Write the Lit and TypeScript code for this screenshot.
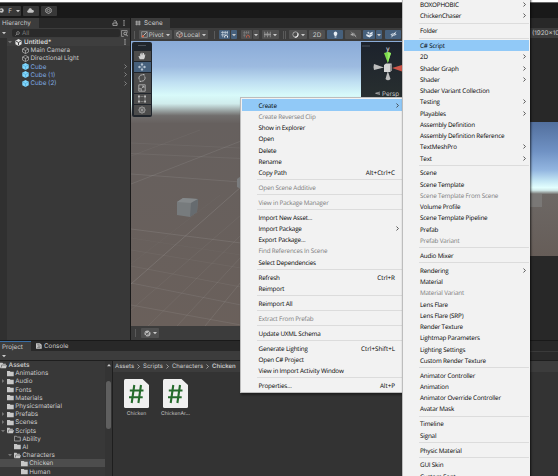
import { LitElement, html, css, svg, nothing } from "lit";
import { customElement, property } from "lit/decorators.js";
import { classMap } from "lit/directives/class-map.js";

interface Item { label: string; off?: boolean; hot?: boolean; sub?: boolean; key?: string }
type Entry = Item | null;

const it = (label: string, o: Partial<Item> = {}): Item => ({ label, ...o });
const sub = { sub: true };
const off = { off: true };

const CONTEXT: Entry[] = [
  it("Create", { sub: true, hot: true }), it("Create Reversed Clip", off), it("Show in Explorer"), it("Open"),
  it("Delete"), it("Rename"), it("Copy Path", { key: "Alt+Ctrl+C" }), null,
  it("Open Scene Additive", off), null, it("View in Package Manager", off), null,
  it("Import New Asset..."), it("Import Package", sub), it("Export Package..."),
  it("Find References In Scene", off), it("Select Dependencies"), null,
  it("Refresh", { key: "Ctrl+R" }), it("Reimport"), null, it("Reimport All"), null,
  it("Extract From Prefab", off), null, it("Update UXML Schema"), null,
  it("Generate Lighting", { key: "Ctrl+Shift+L" }), it("Open C# Project"), it("View in Import Activity Window"), null,
  it("Properties...", { key: "Alt+P" }),
];

const CREATE: Entry[] = [
  it("BOXOPHOBIC", sub), it("ChickenChaser", sub), null, it("Folder"), null,
  it("C# Script", { hot: true }), it("2D", sub), it("Shader Graph", sub), it("Shader", sub),
  it("Shader Variant Collection"), it("Testing", sub), it("Playables", sub), it("Assembly Definition"),
  it("Assembly Definition Reference"), it("TextMeshPro", sub), it("Text", sub), null,
  it("Scene"), it("Scene Template"), it("Scene Template From Scene", off), it("Volume Profile"),
  it("Scene Template Pipeline"), it("Prefab"), it("Prefab Variant", off), null, it("Audio Mixer"), null,
  it("Rendering", sub), it("Material"), it("Material Variant", off), it("Lens Flare"), it("Lens Flare (SRP)"),
  it("Render Texture"), it("Lightmap Parameters"), it("Lighting Settings"), it("Custom Render Texture"), null,
  it("Animator Controller"), it("Animation"), it("Animator Override Controller"), it("Avatar Mask"), null,
  it("Timeline"), it("Signal"), null, it("Physic Material"), null, it("GUI Skin"), it("Custom Font"),
];

@customElement("popup-menu")
class PopupMenu extends LitElement {
  @property({ attribute: false }) items: Entry[] = [];
  static styles = css`
    :host { display: block; background: #f2f2f2; color: #000; font: 6.3px "Open Sans", "Noto Sans", sans-serif; letter-spacing: -0.18px; text-rendering: geometricPrecision; }
    .row { height: 11.25px; line-height: 11px; display: flex; align-items: center; padding: 0 7px 0 16.5px; white-space: nowrap; }
    .label { flex: 1; }
    .keys { letter-spacing: -0.02px; }
    .hot { background: #91c9f7; }
    .off { color: #7c7c7c; }
    .sep { height: 3.67px; display: flex; align-items: center; padding-left: 15px; }
    .line { flex: 1; height: 1px; background: #dcdcdc; }
    svg { width: 3px; height: 5px; margin-right: -4px; }
  `;
  render() {
    return this.items.map((e) => e === null
      ? html`<div class="sep"><div class="line"></div></div>`
      : html`<div class=${classMap({ row: true, hot: !!e.hot, off: !!e.off })}>
          <span class="label">${e.label}</span>
          ${e.key ? html`<span class="keys">${e.key}</span>` : nothing}
          ${e.sub ? html`<svg viewBox="0 0 3 5"><path d="M.5 .5L2.4 2.5L.5 4.5" fill="none" stroke="#333" stroke-width=".8"/></svg>` : nothing}
        </div>`);
  }
}

const ICONS: Record<string, unknown> = {
  unity: svg`<path d="M5 0L9.4 2.5V7.5L5 10L.6 7.5V2.5Z" fill="#e4e4e4"/><path d="M5 5V9M5 5L1.5 3M5 5L8.5 3" stroke="#333" stroke-width="1.3"/>`,
  cube: svg`<path d="M5 .6L9.2 2.8V7.2L5 9.4L.8 7.2V2.8ZM.8 2.8L5 5L9.2 2.8M5 5V9.4" fill="none" stroke="#b8b8b8" stroke-width="1"/>`,
  prefab: svg`<path d="M5 0L9.6 2.4V7.6L5 10L.4 7.6V2.4Z" fill="#7fd6fd"/><path d="M.6 2.6L5 5L9.4 2.6M5 5V9.6" fill="none" stroke="#4ba3d0" stroke-width=".9"/>`,
  folder: svg`<path d="M0 1.3H4L5 2.6H9.6V9H0Z" fill="#c8c8c8"/>`,
  empty: svg`<path d="M.6 1.8H3.8L4.8 3H9V8.6H.6Z" fill="none" stroke="#bdbdbd" stroke-width="1"/>`,
  open: svg`<path d="M0 1.2H3.6L4.6 2.4H8.4V4H2.4L.8 8.8H0Z" fill="#c8c8c8"/><path d="M2.8 4.6H10L8.4 9H1.4Z" fill="#c8c8c8"/>`,
  down: svg`<path d="M0 2.5H10L5 8Z" fill="currentColor"/>`,
  right: svg`<path d="M2.5 0V10L8 5Z" fill="currentColor"/>`,
  up: svg`<path d="M0 8H10L5 2.5Z" fill="currentColor"/>`,
  chev: svg`<path d="M3 1L7 5L3 9" fill="none" stroke="currentColor" stroke-width="1.3"/>`,
  search: svg`<circle cx="6" cy="4" r="2.8" fill="none" stroke="#aaa" stroke-width="1.2"/><path d="M4 6L1 9" stroke="#aaa" stroke-width="1.3"/>`,
  find: svg`<path d="M8.8 4V.8H.8V9.2H4" fill="none" stroke="#aaa"/><circle cx="6" cy="5" r="2" fill="none" stroke="#ccc"/><path d="M7.4 6.5L9.7 9" stroke="#ccc" stroke-width="1.3"/>`,
  lock: svg`<path d="M1.5 5H8.5V9H1.5Z" fill="none" stroke="#c4c4c4" stroke-width="1.2"/><path d="M3 2.2C3 .8 7 .8 7 2.2V5" fill="none" stroke="#c4c4c4" stroke-width="1.2"/>`,
  dots: svg`<path d="M4 .5H6V2.3H4ZM4 4H6V5.8H4ZM4 7.6H6V9.4H4Z" fill="#c4c4c4"/>`,
  hash: svg`<path d="M3 1V9M7 1V9M.5 3.3H9.5M.5 6.8H9.5" stroke="#d0d0d0" stroke-width="1.1"/>`,
  console: svg`<path d="M0 .5H6.5L9.5 3V9.5H0Z" fill="#c4c4c4"/><path d="M2 3H6M3.5 5.2H8M2 7.3H7" stroke="#444"/>`,
  cloud: svg`<path d="M2.3 8.2C-.4 8.2-.3 4.8 2 4.6C2.2 1.4 6.3 1 7 3.8C10.6 3.7 10.7 8.2 7.8 8.2Z" fill="#c4c4c4"/>`,
  gear: svg`<path d="M5 .7L8.8 2.8V7.2L5 9.3L1.2 7.2V2.8Z" fill="none" stroke="#b4b4b4" stroke-width="1.2"/><circle cx="5" cy="5" r="1.7" fill="none" stroke="#b4b4b4"/>`,
  user: svg`<circle cx="5" cy="5" r="4.4" fill="#c4c4c4"/><circle cx="4" cy="4.5" r="1.7" fill="#333"/>`,
  pivot: svg`<path d="M1 1H9V9H1Z" fill="none" stroke="#aaa" stroke-width="1"/><path d="M3 7L8 2" stroke="#ddd" stroke-width="1.1"/><path d="M1.4 6.2H4V8.8H1.4Z" fill="#e0613f"/>`,
  local: svg`<path d="M5 .8L9 2.8V7.2L5 9.2L1 7.2V2.8ZM1 2.8L5 5L9 2.8M5 5V9" fill="none" stroke="#bbb" stroke-width="1"/><circle cx="6.5" cy="6.5" r="1.8" fill="none" stroke="#c66a50"/>`,
  grid: svg`<path d="M2.5 0V9M6 0V5M9 0V5M0 2H10M0 5.5H6" stroke="#d9e2ec" stroke-width=".9"/><path d="M5.3 9.5V7Q7.3 4.5 9.3 7V9.5" fill="none" stroke="#fff" stroke-width="1.2"/>`,
  snap: svg`<path d="M2 0V9M5 0V4M8 0V4M0 2.5H9M0 6H4" stroke="#888" stroke-width=".8"/><path d="M5 9.5V7Q7 4.5 9 7V9.5" fill="none" stroke="#b85c48" stroke-width="1.4"/>`,
  ruler: svg`<path d="M1 1V9M3 3V7M5 1V9M7 3V7M9 1V9M0 5H10" stroke="#aaa" stroke-width=".9"/>`,
  shade: svg`<circle cx="5" cy="5" r="3.8" fill="#4d4d4d" stroke="#c8c8c8" stroke-width="1"/><path d="M8 3.2A3.8 3.8 0 0 1 4 8.8" stroke="#eee" stroke-width="1.6" fill="none"/>`,
  bulb: svg`<path d="M5 .8A2.9 2.9 0 0 1 6.5 6V7.2H3.5V6A2.9 2.9 0 0 1 5 .8ZM3.7 8H6.3V9.2H3.7Z" fill="#e8eef4"/>`,
  audio: svg`<path d="M1 3.8H2.8L5 2V8L2.8 6.2H1Z" fill="#aaa"/><path d="M6.5 3.5V6.5M8 5.5V8M1.5 1L9 9" stroke="#aaa" stroke-width=".9"/>`,
  fx: svg`<path d="M5 3.2L9.5 1V3.4L5 5.6ZM.5 4.2L5 6.2L9.5 4.2V6L5 9.4L.5 7ZM3.2 .8L4 2.2L5.4 2.6L4 3.2L3.2 4.6L2.5 3.2L1 2.6L2.5 2.2Z" fill="#e6edf5"/>`,
  eye: svg`<path d="M.5 5.3Q5 .5 9.5 4.8Q5 9.5 .5 5.3Z" fill="#c4d0dc"/><circle cx="5" cy="5" r="1.4" fill="#46607c"/><path d="M2 9L8.5 1" stroke="#fff" stroke-width="1"/>`,
  hand: svg`<path d="M2.2 9.2L.6 5.2L1.6 4.8L2.7 6V1.8H3.8V4.5L4.4 .8H5.6V4.5L6.4 1.2H7.5V4.8L8.3 2.8L9.2 3.2L8.3 7.5L7.3 9.2Z" fill="#d2d2d2"/>`,
  move: svg`<path d="M5 0L6.8 2.2H3.2ZM5 10L6.8 7.8H3.2ZM0 5L2.2 3.2V6.8ZM10 5L7.8 3.2V6.8Z" fill="#dbe5ef"/><path d="M5 2.5V4M5 6V7.5M2.5 5H4M6 5H7.5" stroke="#dbe5ef"/>`,
  rotate: svg`<path d="M1.6 7A4 4 0 0 1 5.6 1.1M8.4 3A4 4 0 0 1 4.4 8.9" fill="none" stroke="#bdbdbd" stroke-width="1.1"/><path d="M5.2 0H8V2.6ZM4.8 10H2V7.4Z" fill="#bdbdbd"/>`,
  scale: svg`<path d="M1 1H9V9H1ZM1 6H4V9" fill="none" stroke="#bdbdbd"/><path d="M4.5 5.5L7.4 2.6M5 2.6H7.4V5" fill="none" stroke="#bdbdbd"/>`,
  rect: svg`<path d="M0 .5H2.4V3H0ZM7.6 .5H10V3H7.6ZM0 7H2.4V9.5H0ZM7.6 7H10V9.5H7.6Z" fill="#bdbdbd"/><path d="M3 1.8H7M3 8.2H7M1.2 3.5V6.5M8.8 3.5V6.5" stroke="#999" stroke-width=".8"/>`,
  multi: svg`<circle cx="5" cy="5" r="3.8" fill="none" stroke="#aaa" stroke-width=".9"/><path d="M5 .5V9.5M.5 5H9.5M2 1.6L8 8.4M8 1.6L2 8.4" stroke="#aaa" stroke-width=".7"/>`,
  probe: svg`<circle cx="5" cy="5" r="4.3" fill="#b8b8b8"/><path d="M1.5 8.5L8.8 1.5M2 4L4.2 5.5M5.6 7.6L6 4" stroke="#444" stroke-width="1.1"/>`,
};

@customElement("glyph-icon")
class GlyphIcon extends LitElement {
  @property() name = "";
  static styles = css`
    :host { display: block; width: 7px; height: 7px; flex: none; }
    svg { display: block; width: 100%; height: 100%; }
  `;
  render() { return html`<svg viewBox="0 0 10 10">${ICONS[this.name]}</svg>`; }
}

const g = (name: string, cls = "") => html`<glyph-icon class=${cls} name=${name}></glyph-icon>`;

interface Node { label: string; depth: number; icon: string; arrow?: string; sel?: boolean; bold?: boolean }
const TREE: Node[] = [
  { label: "Assets", depth: 0, icon: "open", bold: true },
  { label: "Animations", depth: 1, icon: "folder" },
  { label: "Audio", depth: 1, icon: "folder", arrow: "right" },
  { label: "Fonts", depth: 1, icon: "folder" },
  { label: "Materials", depth: 1, icon: "folder" },
  { label: "Physicsmaterial", depth: 1, icon: "folder" },
  { label: "Prefabs", depth: 1, icon: "folder", arrow: "right" },
  { label: "Scenes", depth: 1, icon: "folder", arrow: "right" },
  { label: "Scripts", depth: 1, icon: "open", arrow: "down" },
  { label: "Ability", depth: 2, icon: "empty" },
  { label: "AI", depth: 2, icon: "folder" },
  { label: "Characters", depth: 2, icon: "open", arrow: "down" },
  { label: "Chicken", depth: 3, icon: "folder", sel: true },
  { label: "Human", depth: 3, icon: "folder" },
];

@customElement("app-root")
class AppRoot extends LitElement {
  static styles = css`
    :host { display: block; position: relative; width: 558px; height: 476px; overflow: hidden; background: #191919; color: #cacaca; font: 6.3px Inter, sans-serif; text-rendering: geometricPrecision; }
    * { box-sizing: border-box; }
    .app { display: flex; flex-direction: column; height: 476px; white-space: nowrap; }
    .edge { height: 3px; background: #fff; border-bottom: 1px solid #6a6a6a; flex: none; }
    .top { height: 15px; flex: none; display: flex; align-items: center; background: #191919; gap: 2.5px; }
    .btn { height: 10px; background: #383838; border-radius: 1px; display: flex; align-items: center; justify-content: center; gap: 4px; }
    .acct { width: 22px; margin-left: -1.5px; }
    .wide { width: 15.5px; }
    .arr { width: 4px; height: 4px; }
    .main { height: 322px; flex: none; display: flex; }
    .hier { width: 130px; background: #383838; }
    .tabs { height: 10px; background: #282828; display: flex; align-items: center; }
    .tab { height: 10px; background: #3c3c3c; display: flex; align-items: center; gap: 3px; }
    .grow { flex: 1; }
    .s5 { width: 5px; height: 5px; }
    .s6 { width: 6px; height: 6px; }
    .searchbar { height: 10px; background: #3c3c3c; display: flex; align-items: center; padding-left: 2px; gap: 6px; }
    .search { width: 108px; height: 8px; background: #2a2a2a; border-radius: 2px; display: flex; align-items: center; gap: 2px; padding-left: 3px; color: #777; }
    .find { margin-left: -5px; width: 7px; height: 7px; }
    .list { height: 302px; border-left: 7px solid #303030; }
    .scene-row { height: 8.2px; display: flex; align-items: center; font-weight: 600; color: #d6d6d6; background: #3e3e3e; padding-left: 1px; gap: 2.5px; }
    .obj { height: 8.2px; display: flex; align-items: center; gap: 2px; padding: 0 1px 0 14.5px; }
    .blue { color: #7fa9e0; }
    .chv { width: 5px; height: 5px; color: #aaa; margin-right: 1px; }
    .tri { width: 4px; height: 4px; color: #777; flex: none; }
    .scene { flex: 1; margin-left: 1px; background: #3c3c3c; display: flex; flex-direction: column; }
    .tools { height: 13px; flex: none; background: #3c3c3c; display: flex; align-items: center; padding-left: 3px; }
    .tb { height: 9.5px; background: #505050; display: flex; align-items: center; justify-content: center; border-radius: 1px; gap: 2px; }
    .tb.on, .tool.on { background: #46607c; }
    .grip { width: 1px; height: 8px; background: #5a5a5a; }
    .view { height: 285px; flex: none; position: relative; }
    .art { display: block; width: 427px; height: 285px; }
    .toolbox { position: absolute; left: 1px; top: 1px; width: 20px; height: 75px; background: #20252c; border-radius: 2px; padding: 9px 1.5px 0; display: flex; flex-direction: column; gap: .8px; }
    .tool { height: 10px; background: #4c4c4c; display: flex; align-items: center; justify-content: center; color: #ccc; }
    .tool glyph-icon { width: 8px; height: 8px; }
    .handle { position: absolute; left: 6px; top: 3px; width: 8px; height: 1px; background: #4a5058; }
    .status { height: 14px; background: #3c3c3c; display: flex; align-items: center; padding-left: 4px; gap: 5px; }
    .bottom { flex: 1; margin-top: 1px; background: #383838; display: flex; flex-direction: column; min-height: 0; }
    .bottom .tabs { flex: none; }
    .proj { width: 31px; border-top: 1px solid #3a6ea5; padding-left: 2px; }
    .con { background: none; padding-left: 5px; gap: 2px; }
    .bar { height: 10px; flex: none; background: #3c3c3c; border-bottom: 1px solid #1e1e1e; display: flex; align-items: center; padding-left: 2px; }
    .field { width: 120px; height: 9px; background: #2a2a2a; border-top: 1px solid #3a3a3a; }
    .split { flex: 1; display: flex; min-height: 0; }
    .tree { width: 105px; overflow: hidden; }
    .node { height: 8.2px; display: flex; align-items: center; gap: 1.6px; }
    .d1 { padding-left: 1px; } .d2 { padding-left: 8px; } .d3 { padding-left: 15px; }
    .bold { font-weight: 600; }
    .sel { background: #4d4d4d; }
    .gap { width: 4px; flex: none; }
    .scroll { width: 7px; background: #343434; display: flex; flex-direction: column; align-items: center; padding-top: 2px; gap: 14px; }
    .thumb { width: 5px; height: 48px; border-radius: 3px; background: #5f5f5f; }
    .pane { flex: 1; background: #333; border-left: 1px solid #1e1e1e; }
    .crumbs { height: 11px; background: #3c3c3c; display: flex; align-items: center; gap: 2px; padding-left: 2px; font-size: 6px; }
    .crumbs glyph-icon { width: 5px; height: 5px; }
    .files { display: flex; padding: 7px 0 0 4px; }
    .file { width: 39px; display: flex; flex-direction: column; align-items: center; gap: 3px; font-size: 5.1px; color: #c4c4c4; }
    .doc { width: 25px; height: 29px; display: block; }
    .context { position: absolute; left: 240px; top: 97px; width: 163px; height: 296px; border: 1px solid #bdbdbd; border-right-color: #ddd; padding-top: 1.4px; padding-left: 1px; box-shadow: 1px 2px 2px #0006; }
    .create { position: absolute; left: 402px; top: -2px; width: 128px; height: 482px; border-left: 1px solid #bdbdbd; padding: .9px 1px 0 .5px; box-shadow: 1px 0 2px #000a; }
    .game { position: absolute; left: 530px; top: 18px; width: 28px; height: 322px; background: #282828; }
    .res { height: 10px; margin-top: 10px; background: #3c3c3c; padding-left: 2px; line-height: 10px; overflow: hidden; white-space: nowrap; }
    .cam { height: 134px; margin-top: 84px; padding-top: 72px; background: linear-gradient(#526f9d 0, #7092c4 22%, #93b6e0 36%, #c4e6f4 44%, #e3fffe 49%, #d0e8e8 51%, #6d6865 54%, #665d58 100%); }
    .block { width: 12px; height: 13px; background: #7a7876; }
  `;

  art() {
    const line = (d: string, o = 0.22) => svg`<path d=${d} stroke="#c4c4c4" stroke-opacity=${o} stroke-width=".8" fill="none"/>`;
    return html`<svg class="art" viewBox="131 41 427 285">
      <defs>
        <linearGradient id="sky" x1="0" y1="0" x2="0" y2="1">
          <stop offset="0" stop-color="#8aabd8"/><stop offset=".09" stop-color="#9dbbe0"/><stop offset=".145" stop-color="#c0e0f2"/>
          <stop offset=".19" stop-color="#d8fafa"/><stop offset=".22" stop-color="#d0ecec"/><stop offset=".235" stop-color="#b0c0c0"/><stop offset=".262" stop-color="#716e6d"/>
          <stop offset=".29" stop-color="#66605e"/><stop offset="1" stop-color="#6a605b"/>
        </linearGradient>
        <linearGradient id="dark" x1="0" y1="0" x2="0" y2="1"><stop offset="0" stop-color="#1c222c"/><stop offset="1" stop-color="#293030"/></linearGradient>
      </defs>
      <rect x="131" y="41" width="427" height="285" fill="url(#sky)"/>
      ${line("M131 184L241 141", .17)}${line("M131 153.500L241 158.500", .12)}${line("M131 174L241 182", .17)}${line("M131 143L241 148", .1)}
      ${line("M131 284L241 187", .22)}${line("M131 229L241 243", .18)}${line("M131 156L200 130", .08)}
      ${line("M131 266L241 287", .11)}${line("M131 283L241 305", .14)}${line("M131 305L241 325", .14)}
      ${line("M131 250L241 268", .08)}${line("M131 238L241 255", .06)}${line("M131 310L241 215", .1)}
      ${line("M148 326L241 235", .11)}${line("M177 326L241 257", .13)}${line("M205 326L241 282", .16)}${line("M131 264L220 195", .06)}
      <path d="M177 202L183 198L198 199L197 212L190 217L177 215Z" fill="#777b7d"/><path d="M177 202L183 198L198 199L191 203Z" fill="#85898b"/>
      <path d="M191 203L198 199L197 212L190 217Z" fill="#666b6f"/><path d="M237 179L241 176V189L237 187Z" fill="#7b7d7f"/>
      <rect x="361" y="42" width="60" height="60" fill="url(#dark)"/>
      <path d="M362 46H370" stroke="#49515b"/>
      <path d="M384 53L387.800 52L391 53L387.800 63Z" fill="#7ed94c"/><path d="M387.800 52L391 53L387.800 63Z" fill="#96ee66"/>
      <path d="M374 64L384 67.500L374 70Q373 67 374 64Z" fill="#bdbdbd"/><path d="M385.500 79L387.800 71L390.500 79Q388 81.500 385.500 79Z" fill="#bdbdbd"/>
      <path d="M392 68L402 65V71.500Z" fill="#cf5549"/>
      <path d="M384 65L386 63.500H391.500V70.500L390 72H384Z" fill="#d6d6d6"/><path d="M391.500 63.500V70.500L390 72V65Z" fill="#999"/>
      <path d="M380 92L375.500 93.300L380 94.600M376 93.300H380" stroke="#aaa" stroke-width=".7" fill="none"/>
      <text x="386" y="50.500" font-size="6.500" fill="#eee" font-family="Inter">y</text>
      <text x="382" y="95.600" font-size="6.300" fill="#c4c4c4" font-family="Inter">Persp</text>
    </svg>`;
  }

  doc() {
    return html`<svg class="doc" viewBox="0 0 25 29"><path d="M1.500 0H18.500L25 6V27.500Q25 29 23.500 29H1.500Q0 29 0 27.500V1.500Q0 0 1.500 0Z" fill="#f0f0f0"/>
      <path d="M10.300 6L7.700 24M17 6L14.400 24M5.800 11.500H19.500M5 18.300H18.700" stroke="#256b2c" stroke-width="2.100"/></svg>`;
  }

  tb(w: number, ml: number, body: unknown, on = false) {
    return html`<div class=${classMap({ tb: true, on })} style="width:${w}px;margin-left:${ml}px">${body}</div>`;
  }

  render() {
    const arrow = g("down", "arr");
    return html`
      <div class="app">
        <div class="edge"></div>
        <div class="top">
          <div class="btn acct">${g("user", "s5")}<span>F</span>${arrow}</div>
          <div class="btn wide">${g("cloud")}</div>
          <div class="btn wide">${g("gear")}</div>
        </div>
        <div class="main">
          <div class="hier">
            <div class="tabs"><div class="tab" style="width:39px;padding-left:2px">Hierarchy</div><div class="grow"></div>${g("lock", "s6")}<span style="width:3px"></span>${g("dots", "s6")}<span style="width:3px"></span></div>
            <div class="searchbar">${arrow}<div class="search">${g("search", "s5")}All</div>${g("find", "find")}</div>
            <div class="list">
              <div class="scene-row">${g("down", "tri")}${g("unity")}<span class="grow">Untitled*</span>${g("dots", "s6")}<span style="width:0"></span></div>
              <div class="obj">${g("cube")}Main Camera</div>
              <div class="obj">${g("cube")}Directional Light</div>
              ${["Cube", "Cube (1)", "Cube (2)"].map((c) => html`<div class="obj blue">${g("prefab")}<span class="grow">${c}</span>${g("chev", "chv")}</div>`)}
            </div>
          </div>
          <div class="scene">
            <div class="tabs"><div class="tab" style="width:39px;padding-left:4px">${g("hash", "s6")}Scene</div></div>
            <div class="tools">
              <div class="grip"></div>
              ${this.tb(33, 4, html`${g("pivot")}<span style="margin-left:-1.5px">Pivot</span>${arrow}`)}
              ${this.tb(34, 2, html`${g("local")}<span style="margin-left:-1.5px">Local</span>${arrow}`)}
              <div class="grip" style="margin-left:6px"></div>
              ${this.tb(11, 4, g("grid"), true)}${this.tb(6, 1, arrow, true)}
              ${this.tb(11, 4, g("snap"))}${this.tb(6, 1, arrow)}
              ${this.tb(17, 3, html`${g("ruler")}${arrow}`)}
              <div class="grip" style="margin-left:4px"></div><div class="grip" style="margin-left:1px"></div>
              ${this.tb(18, 3, html`${g("shade")}${arrow}`)}
              ${this.tb(16, 2, html`<span>2D</span>`)}
              ${this.tb(16, 2, g("bulb"), true)}
              ${this.tb(16, 2, g("audio"))}
              ${this.tb(12, 2, g("fx"), true)}${this.tb(6, 1, arrow, true)}
              ${this.tb(16, 3, g("eye"), true)}
            </div>
            <div class="view">
              ${this.art()}
              <div class="toolbox"><div class="handle"></div>
                ${["hand", "move", "rotate", "scale", "rect", "multi"].map((t) => html`<div class=${classMap({ tool: true, on: t === "move" })}>${g(t)}</div>`)}
              </div>
            </div>
            <div class="status"><div class="grip"></div>${this.tb(18, 0, html`${g("probe")}${arrow}`)}</div>
          </div>
        </div>
        <div class="bottom">
          <div class="tabs"><div class="tab proj">Project</div><div class="tab con">${g("console", "s6")}Console</div></div>
          <div class="bar">${arrow}<div class="grow"></div><div class="field"></div></div>
          <div class="split">
            <div class="tree">${TREE.map((n) => html`<div class=${classMap({ node: true, sel: !!n.sel, bold: !!n.bold, ["d" + n.depth]: true })}>
              ${n.depth ? (n.arrow ? g(n.arrow, "tri") : html`<span class="gap"></span>`) : nothing}${g(n.icon)}<span>${n.label}</span></div>`)}</div>
            <div class="scroll">${g("up", "arr")}<div class="thumb"></div></div>
            <div class="pane">
              <div class="crumbs"><span>Assets</span>${g("chev")}<span>Scripts</span>${g("chev")}<span>Characters</span>${g("chev")}<span class="bold">Chicken</span></div>
              <div class="files"><div class="file">${this.doc()}<span>Chicken</span></div><div class="file">${this.doc()}<span>ChickenAr...</span></div></div>
            </div>
          </div>
        </div>
      </div>
      <div class="game"><div class="res">(1920x10</div><div class="cam"><div class="block"></div></div></div>
      <popup-menu class="context" .items=${CONTEXT}></popup-menu>
      <popup-menu class="create" .items=${CREATE}></popup-menu>
    `;
  }
}
